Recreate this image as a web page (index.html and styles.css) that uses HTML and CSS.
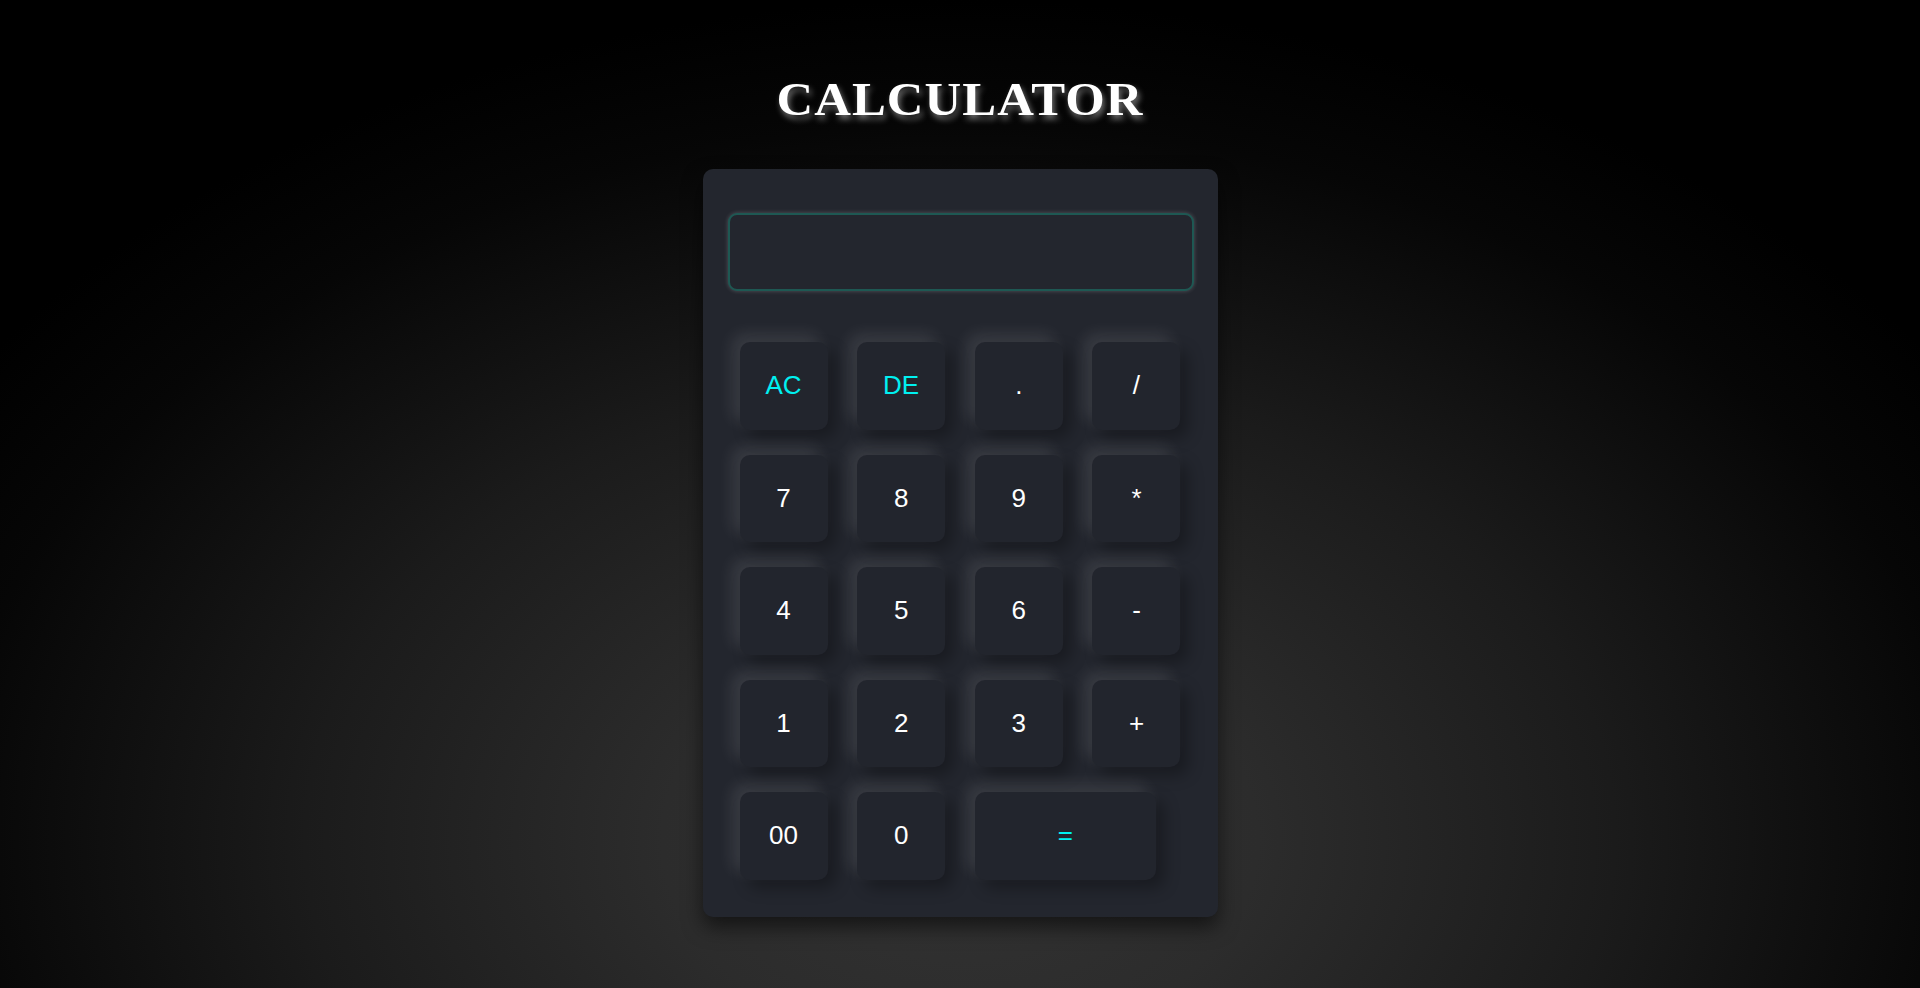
FILE: index.html
```html
<!DOCTYPE html>
<html lang="en">
<head>
<meta charset="utf-8">
<title>Calculator</title>
<link rel="stylesheet" href="styles.css">
</head>
<body>
  <h1 class="title">CALCULATOR</h1>
  <div class="calculator">
    <input class="display" type="text" readonly>
    <div class="keys">
      <button class="key accent">AC</button>
      <button class="key accent">DE</button>
      <button class="key">.</button>
      <button class="key">/</button>
      <button class="key">7</button>
      <button class="key">8</button>
      <button class="key">9</button>
      <button class="key">*</button>
      <button class="key">4</button>
      <button class="key">5</button>
      <button class="key">6</button>
      <button class="key">-</button>
      <button class="key">1</button>
      <button class="key">2</button>
      <button class="key">3</button>
      <button class="key">+</button>
      <button class="key">00</button>
      <button class="key">0</button>
      <button class="key accent equal">=</button>
    </div>
  </div>
</body>
</html>
```

FILE: styles.css
```css
html {
  background: #000;
}
body {
  margin: 0;
  min-height: 988px;
  display: flex;
  flex-direction: column;
  align-items: center;
  background: radial-gradient(ellipse 62% 85% at 50% 85%, #333333 0%, #2c2c2c 25%, #1b1b1b 55%, #060606 85%, #000 100%);
}
.title {
  margin: 75px 0 0;
  font-family: "Liberation Serif", "Times New Roman", serif;
  font-weight: bold;
  font-size: 47px;
  line-height: 48px;
  letter-spacing: 1px;
  color: #fff;
  transform: scaleX(1.08);
  text-shadow: 2px 4px 6px rgba(255, 255, 255, 0.45);
}
.calculator {
  margin-top: 46px;
  width: 515px;
  box-sizing: border-box;
  padding: 44px 24px 37px 25px;
  background: #23262e;
  border-radius: 10px;
  box-shadow: 0 10px 20px rgba(0, 0, 0, 0.55);
}
.display {
  display: block;
  width: 100%;
  height: 78px;
  box-sizing: border-box;
  margin: 0;
  padding: 0 20px;
  border: 2px solid #1e5853;
  border-radius: 9px;
  background: #23262e;
  box-shadow: 0 0 4px rgba(255, 255, 255, 0.22);
  color: #fff;
  font-family: "Liberation Sans", Arial, sans-serif;
  font-size: 40px;
  text-align: right;
  outline: none;
}
.keys {
  margin: 51px 13px 0 12px;
  display: grid;
  grid-template-columns: repeat(4, 88px);
  grid-auto-rows: 87.5px;
  column-gap: 29.67px;
  row-gap: 25px;
}
.key {
  border: none;
  border-radius: 10px;
  background: #22252d;
  color: #fff;
  font-family: "Liberation Sans", Arial, sans-serif;
  font-size: 26px;
  padding: 0;
  box-shadow: -8px -8px 16px rgba(255, 255, 255, 0.1), 8px 8px 16px rgba(0, 0, 0, 0.3);
  cursor: pointer;
}
.accent {
  color: #00f0f0;
}
.equal {
  grid-column: 3 / span 2;
  width: 181px;
}
```
